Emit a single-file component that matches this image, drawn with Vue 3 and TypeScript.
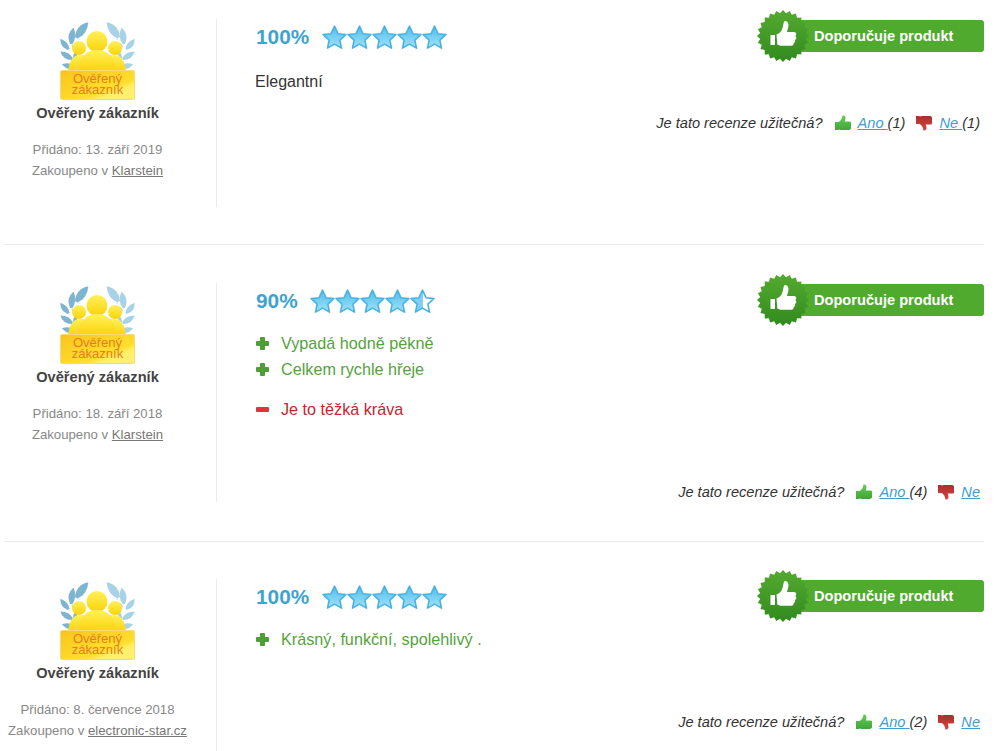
<script setup lang="ts">
interface Review {
  pct: number
  date: string
  shop: string
  pros: string[]
  cons: string[]
  plain: string
  yes: number
  no: number
  tall: boolean
}

const reviews: Review[] = [
  { pct: 100, date: '13. září 2019', shop: 'Klarstein', pros: [], cons: [], plain: 'Elegantní', yes: 1, no: 1, tall: false },
  { pct: 90, date: '18. září 2018', shop: 'Klarstein', pros: ['Vypadá hodně pěkně', 'Celkem rychle hřeje'], cons: ['Je to těžká kráva'], plain: '', yes: 4, no: 0, tall: true },
  { pct: 100, date: '8. července 2018', shop: 'electronic-star.cz', pros: ['Krásný, funkční, spolehlivý .'], cons: [], plain: '', yes: 2, no: 0, tall: true },
]

function sealPoints(): string {
  const pts: string[] = []
  const n = 24
  for (let i = 0; i < n * 2; i++) {
    const r = i % 2 === 0 ? 26 : 23
    const a = (Math.PI * i) / n
    pts.push(`${(26 + r * Math.sin(a)).toFixed(2)},${(26 - r * Math.cos(a)).toFixed(2)}`)
  }
  return pts.join(' ')
}
const seal = sealPoints()

const starPath = 'M12.5 1.2l3.4 7.5 8 .9-6 5.5 1.6 8-7-4-7 4 1.6-8-6-5.5 8-.9z'
const sealThumb = 'M13.5 25h4.5v10h-4.5z M19.5 24.5c3-1 5-3 6-6.5c.8-2.5.8-5 2-7c2-.3 4 .8 4 4c0 2.5-1 4.5-1.6 7h7c1.6 0 2.4 1 2.4 2.2c0 .8-.4 1.4-1 1.8c.8.6 1 1.2 1 2c0 .9-.6 1.6-1.4 2c.3.5.4 1 .2 1.6c-.2.7-.8 1.2-1.4 1.4c.3 1.6-.8 2.8-2.4 2.8h-9c-2 0-3.2-.8-5-1.4z'
const miniThumb = 'M0 7h3.6v8H0z M3.6 7c2-1 3.4-3 3.9-6.5c2-.5 3 1 3 2.5c0 1.5-.5 2.5-.8 3.5h4.6c1.2 0 2 .8 2 2v3.5c0 1.8-1 3-2.6 3H6c-1 0-1.8-.3-2.4-.8z'
const leaf = 'M0 0Q3.6 -0.5 1 0Q3 -4 0 -8Q-3 -4 0 0z'
const leaves = [
  { x: 16, y: 15, r: 42, s: 2.5 }, { x: 11, y: 22, r: 12, s: 2.1 }, { x: 9, y: 28, r: -34, s: 1.7 },
  { x: 13, y: 38, r: -54, s: 1.8 }, { x: 16, y: 46, r: -74, s: 1.7 }, { x: 13, y: 25, r: 55, s: 1.1 }, { x: 14, y: 36, r: 35, s: 1.1 },
]
</script>

<template>
  <div class="page">
    <svg class="defs" width="0" height="0" aria-hidden="true">
      <defs>
        <linearGradient id="starFill" x1="0" y1="0" x2="0" y2="1">
          <stop offset="0" stop-color="#4fbdec" />
          <stop offset="1" stop-color="#a5e1f8" />
        </linearGradient>
        <linearGradient id="starHalf" x1="0" y1="0" x2="1" y2="0">
          <stop offset="0" stop-color="#7fd0f2" />
          <stop offset="0.5" stop-color="#7fd0f2" />
          <stop offset="0.5" stop-color="#ffffff" />
          <stop offset="1" stop-color="#ffffff" />
        </linearGradient>
        <linearGradient id="sealFill" x1="0" y1="0" x2="0" y2="1">
          <stop offset="0" stop-color="#55aa30" />
          <stop offset="1" stop-color="#2f8a1e" />
        </linearGradient>
        <linearGradient id="gold" x1="0" y1="0" x2="0" y2="1">
          <stop offset="0" stop-color="#fff15a" />
          <stop offset="1" stop-color="#fdd207" />
        </linearGradient>
        <linearGradient id="plate" x1="0" y1="0" x2="1" y2="1">
          <stop offset="0" stop-color="#f9c31c" />
          <stop offset="0.65" stop-color="#ffdf2e" />
          <stop offset="0.75" stop-color="#fff066" />
          <stop offset="1" stop-color="#ffef7a" />
        </linearGradient>
        <linearGradient id="upFill" x1="0" y1="0" x2="0" y2="1">
          <stop offset="0" stop-color="#66cc55" />
          <stop offset="1" stop-color="#3fa63a" />
        </linearGradient>
        <linearGradient id="downFill" x1="0" y1="0" x2="0" y2="1">
          <stop offset="0" stop-color="#d9463f" />
          <stop offset="1" stop-color="#a92f2c" />
        </linearGradient>
      </defs>
    </svg>

    <section v-for="(r, i) in reviews" :key="i" class="review">
      <aside class="author">
        <svg class="avatar" width="78" height="80" viewBox="0 0 78 80">
          <g fill="#7db4d2">
            <path v-for="(l, k) in leaves" :key="k" :d="leaf" :transform="`translate(${l.x} ${l.y}) rotate(${l.r}) scale(${l.s})`" />
          </g>
          <g fill="#a8d3e7" transform="matrix(-1 0 0 1 77 0)">
            <path v-for="(l, k) in leaves" :key="k" :d="leaf" :transform="`translate(${l.x} ${l.y}) rotate(${l.r}) scale(${l.s})`" />
          </g>
          <circle cx="20" cy="26" r="7" fill="url(#gold)" />
          <circle cx="56" cy="26" r="7" fill="url(#gold)" />
          <path d="M9 50c1-11 5-17 12-17h34c7 0 11 6 12 17z" fill="url(#gold)" />
          <circle cx="38" cy="19.5" r="10.5" fill="url(#gold)" />
          <path d="M19 50c0-14 8-22 19-22s19 8 19 22z" fill="url(#gold)" />
          <rect x="1.5" y="48.5" width="74" height="29" rx="1.5" fill="url(#plate)" stroke="#f8dc72" />
          <text x="38.5" y="61" class="plate-text">Ověřený</text>
          <text x="38.5" y="72" class="plate-text">zákazník</text>
        </svg>
        <div class="name">Ověřený zákazník</div>
        <div class="meta">Přidáno: {{ r.date }}</div>
        <div class="meta">Zakoupeno v <a class="shop">{{ r.shop }}</a></div>
      </aside>

      <div class="main">
        <header class="head">
          <div class="rating">
            <span class="pct">{{ r.pct }}%</span>
            <svg v-for="s in 5" :key="s" class="star" width="25" height="25" viewBox="0 0 25 25">
              <path :d="starPath" :fill="s === 5 && r.pct < 100 ? 'url(#starHalf)' : 'url(#starFill)'" stroke="#48b4e4" stroke-width="1.6" stroke-linejoin="round" />
            </svg>
          </div>
          <div class="recommend">
            <span class="seal-wrap">
              <svg width="52" height="52" viewBox="0 0 52 52">
                <polygon :points="seal" fill="url(#sealFill)" />
                <path :d="sealThumb" fill="#fff" />
              </svg>
            </span>
            <span class="recommend-label">Doporučuje produkt</span>
          </div>
        </header>

        <div class="body">
          <p v-if="r.plain" class="plain">{{ r.plain }}</p>
          <ul v-if="r.pros.length" class="list">
            <li v-for="p in r.pros" :key="p" class="pro">
              <span class="mark plus"></span>{{ p }}
            </li>
          </ul>
          <ul v-if="r.cons.length" class="list cons">
            <li v-for="c in r.cons" :key="c" class="con">
              <span class="mark minus"></span>{{ c }}
            </li>
          </ul>
        </div>

        <div class="helpful" :class="{ tall: r.tall }">
          <span class="question">Je tato recenze užitečná?</span>
          <svg class="mini" width="16" height="16" viewBox="0 0 16 16"><path :d="miniThumb" fill="url(#upFill)" /></svg>
          <a class="vote">Ano </a>
          <span class="count">({{ r.yes }})</span>
          <svg class="mini no" width="16" height="16" viewBox="0 0 16 16"><path :d="miniThumb" fill="url(#downFill)" transform="matrix(1 0 0 -1 0 16)" /></svg>
          <a class="vote">Ne<template v-if="r.no">&nbsp;</template></a>
          <span v-if="r.no" class="count">({{ r.no }})</span>
        </div>
      </div>
    </section>
  </div>
</template>

<style>
html, body { margin: 0; background: #fff; }
</style>

<style scoped>
.page {
  height: 751px;
  overflow: hidden;
  font-family: "Liberation Sans", Arial, sans-serif;
  color: #333;
  background: #fff;
}
.defs { position: absolute; }
.review {
  display: flex;
  margin: 0 14px 0 4px;
  padding: 38px 0 39px;
  border-bottom: 1px solid #ebebeb;
}
.review:first-of-type { padding: 19px 0 37px; }
.review:last-of-type { border-bottom: 0; padding-top: 37px; }
.author {
  box-sizing: border-box;
  width: 213px;
  min-height: 188px;
  padding: 3px 25px 0 0;
  border-right: 1px solid #ebebeb;
  text-align: center;
  flex: none;
}
.avatar { display: block; margin: 0 auto; }
.plate-text {
  font-family: "Liberation Sans", Arial, sans-serif;
  font-size: 13px;
  fill: #e67e1e;
  text-anchor: middle;
}
.name {
  margin: 1px 0 16px;
  font-size: 14.6px;
  font-weight: 700;
  line-height: 20px;
  color: #444;
}
.meta {
  font-size: 13.2px;
  line-height: 21px;
  color: #888;
  white-space: nowrap;
}
.shop { color: #777; text-decoration: underline; }
.main {
  flex: 1;
  min-width: 0;
  padding-left: 39px;
  display: flex;
  flex-direction: column;
}
.head {
  display: flex;
  justify-content: space-between;
  align-items: flex-start;
}
.rating { display: flex; align-items: center; height: 36px; }
.pct {
  margin-right: 12.5px;
  font-size: 20.8px;
  font-weight: 700;
  color: #3fa3d2;
}
.star { display: block; flex: none; }
.recommend {
  position: relative;
  width: 194px;
  height: 32px;
  margin-top: 1px;
  background: #4faa2e;
  border-radius: 3px;
}
.seal-wrap { position: absolute; left: -33.5px; top: -10px; }
.seal-wrap svg { display: block; }
.recommend-label {
  display: block;
  padding-left: 24px;
  font-size: 14.6px;
  font-weight: 700;
  line-height: 32px;
  color: #fff;
}
.body { margin-top: 11px; }
.plain { margin: 4px 0 0 -1px; font-size: 16px; line-height: 24px; color: #333; }
.list { margin: 0; padding: 0; list-style: none; }
.list li {
  display: flex;
  align-items: center;
  font-size: 16.2px;
  line-height: 26px;
}
.pro { color: #55a33c; }
.con { color: #c1272d; }
.cons { margin-top: 14px; }
.mark {
  position: relative;
  flex: none;
  width: 13px;
  height: 13px;
  margin-right: 12px;
}
.plus::before, .plus::after, .minus::before {
  content: "";
  position: absolute;
  border-radius: 1px;
}
.plus::before { left: 0; right: 0; top: 4px; height: 5px; background: #4f9e35; }
.plus::after { top: 0; bottom: 0; left: 4px; width: 5px; background: #4f9e35; }
.minus::before { left: 0; right: 0; top: 4px; height: 5px; background: #e0343c; }
.helpful {
  display: flex;
  align-items: center;
  justify-content: flex-end;
  padding-right: 4px;
  margin-top: 19px;
  font-size: 14.6px;
  line-height: 20px;
  font-style: italic;
  color: #333;
  white-space: pre;
}
.helpful.tall { margin-top: 60px; }
.mini { margin: 0 7px 0 12px; flex: none; }
.mini.no { margin-left: 11px; }
.vote { color: #3e9dcf; text-decoration: underline; }
</style>
